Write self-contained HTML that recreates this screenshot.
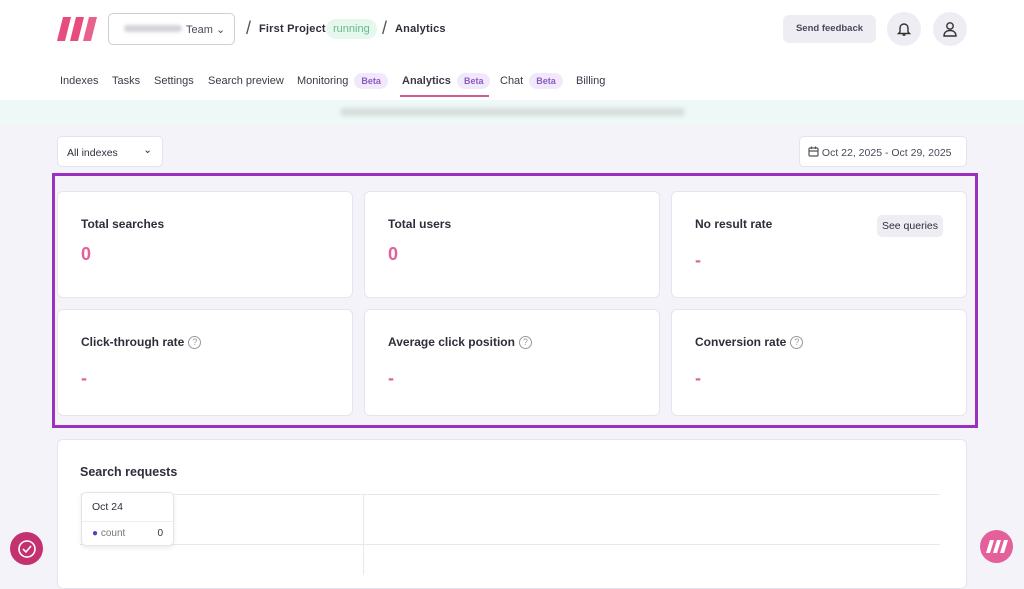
<!DOCTYPE html><html><head><style>
*{box-sizing:border-box;margin:0;padding:0}
body{width:1024px;height:575px;overflow:hidden;background:#f4f3f9;font-family:"Liberation Sans",sans-serif;color:#2f2d3a;position:relative}
.a{position:absolute}
.card{position:absolute;background:#fff;border:1px solid #e6e5ee;border-radius:6px;width:296px;height:107px}
.card .t{position:absolute;left:23px;top:25px;font-size:12px;font-weight:bold;color:#2f2d3a}
.card .v{position:absolute;left:23px;top:52px;font-size:18px;font-weight:bold;color:#e2609b}
.q{display:inline-block;width:13px;height:13px;border:1px solid #999;border-radius:50%;font-size:9px;text-align:center;line-height:11px;color:#999;font-weight:normal;margin-left:4px;vertical-align:1px}
.nav span{position:absolute;top:75px;font-size:11px;color:#3b3946}
.beta{background:#f1e9fb;color:#8a5cc0;border-radius:9px;padding:3px 7px;font-size:9px;font-weight:bold;margin-left:3px}
</style></head><body>
<div class="a" style="left:0;top:0;width:1024px;height:100px;background:#fff"></div>
<div class="a" style="left:0;top:100px;width:1024px;height:25px;background:#eef9f7"></div>
<div class="a" style="left:340px;top:108px;width:345px;height:8px;background:#d6dcdc;border-radius:4px;filter:blur(2px)"></div>
<svg class="a" style="left:57px;top:17px" width="40" height="25"><g fill="#e84c7c"><polygon points="6,0 14,0 8,24 0,24"/><polygon points="19,0 27,0 21,24 13,24"/><polygon points="32,0 40,0 34,24 26,24" fill="#e9628d"/></g></svg>
<div class="a" style="left:108px;top:13px;width:127px;height:32px;border:1px solid #cfcdd6;border-radius:5px"></div>
<div class="a" style="left:124px;top:25px;width:58px;height:7px;background:#d4d3da;border-radius:3px;filter:blur(1.5px)"></div>
<div class="a" style="left:186px;top:23px;font-size:11px;color:#4b4957">Team ⌄</div>
<div class="a" style="left:246px;top:18px;font-size:18px;color:#555">/</div>
<div class="a" style="left:259px;top:23px;font-size:11px;font-weight:bold;letter-spacing:.2px">First Project</div>
<div class="a" style="left:326px;top:19px;background:#e6f7ee;color:#66b98a;border-radius:10px;padding:4px 7px;font-size:11px">running</div>
<div class="a" style="left:382px;top:18px;font-size:18px;color:#555">/</div>
<div class="a" style="left:395px;top:23px;font-size:11px;font-weight:bold;letter-spacing:.2px">Analytics</div>
<div class="a" style="left:783px;top:15px;width:93px;height:28px;background:#eeedf3;border-radius:6px;font-size:9.5px;font-weight:bold;color:#4b4957;text-align:center;line-height:28px">Send feedback</div>
<div class="a" style="left:887px;top:12px;width:34px;height:34px;background:#eeedf3;border-radius:50%"></div>
<svg class="a" style="left:896px;top:21px" width="16" height="16" fill="none" stroke="#333" stroke-width="1.4"><path d="M4 11V7a4 4 0 0 1 8 0v4l1.5 1.5h-11z M6.5 14h3"/></svg>
<div class="a" style="left:933px;top:12px;width:34px;height:34px;background:#eeedf3;border-radius:50%"></div>
<svg class="a" style="left:942px;top:21px" width="16" height="16" fill="none" stroke="#333" stroke-width="1.4"><circle cx="8" cy="5" r="3.2"/><path d="M2 15c0-4 3-5.5 6-5.5s6 1.5 6 5.5z"/></svg>
<div class="nav">
<span style="left:60px">Indexes</span><span style="left:112px">Tasks</span><span style="left:154px">Settings</span><span style="left:208px">Search preview</span><span style="left:297px">Monitoring <b class="beta">Beta</b></span><span style="left:402px;font-weight:bold">Analytics <b class="beta">Beta</b></span><span style="left:500px">Chat <b class="beta">Beta</b></span><span style="left:576px">Billing</span></div>
<div class="a" style="left:400px;top:95px;width:89px;height:2px;background:#d55a93"></div>
<div class="a" style="left:57px;top:136px;width:106px;height:31px;background:#fff;border:1px solid #e4e3ea;border-radius:5px;font-size:10.5px;padding:10px 9px">All indexes<span style="position:absolute;right:10px;top:7px">⌄</span></div>
<div class="a" style="left:799px;top:136px;width:168px;height:31px;background:#fff;border:1px solid #e4e3ea;border-radius:5px;font-size:10.5px;padding:9px 8px;color:#4b4957">
<svg width="11" height="11" style="vertical-align:-1px" fill="none" stroke="#555" stroke-width="1.2"><rect x="1" y="2" width="9" height="8" rx="1"/><path d="M1 5h9M3.5 0.5v2.5M7.5 0.5v2.5"/></svg> Oct 22, 2025 - Oct 29, 2025</div>
<div class="a" style="left:52px;top:173px;width:926px;height:255px;border:3px solid #9b30bf"></div>
<div class="card" style="left:57px;top:191px"><div class="t">Total searches</div><div class="v">0</div></div>
<div class="card" style="left:364px;top:191px"><div class="t">Total users</div><div class="v">0</div></div>
<div class="card" style="left:671px;top:191px"><div class="t">No result rate</div><div class="v" style="top:58px">-</div><div class="a" style="right:23px;top:23px;background:#eeedf3;border-radius:5px;padding:5px 5px;font-size:10.5px">See queries</div></div>
<div class="card" style="left:57px;top:309px"><div class="t">Click-through rate<span class="q">?</span></div><div class="v" style="top:58px">-</div></div>
<div class="card" style="left:364px;top:309px"><div class="t">Average click position<span class="q">?</span></div><div class="v" style="top:58px">-</div></div>
<div class="card" style="left:671px;top:309px"><div class="t">Conversion rate<span class="q">?</span></div><div class="v" style="top:58px">-</div></div>
<div class="a" style="left:57px;top:439px;width:910px;height:150px;background:#fff;border:1px solid #e6e5ee;border-radius:6px"></div>
<div class="a" style="left:80px;top:465px;font-size:12.5px;font-weight:bold">Search requests</div>
<div class="a" style="left:80px;top:494px;width:860px;height:1px;background:#e8e7ee"></div>
<div class="a" style="left:80px;top:544px;width:860px;height:1px;background:#e8e7ee"></div>
<div class="a" style="left:363px;top:494px;width:1px;height:81px;background:#e8e7ee"></div>
<div class="a" style="left:81px;top:492px;width:93px;height:54px;background:#fff;border:1px solid #e4e3ea;border-radius:5px;box-shadow:0 2px 5px rgba(0,0,0,.08)"><div style="padding:8px 10px;font-size:10.5px;border-bottom:1px solid #eee">Oct 24</div><div style="padding:6px 10px;font-size:10px;color:#777"><span style="color:#4a47b8">●</span> count<span style="float:right;color:#333">0</span></div></div>
<div class="a" style="left:10px;top:532px;width:33px;height:33px;border-radius:50%;background:#c4316f"></div>
<svg class="a" style="left:16px;top:538px" width="21" height="21" fill="none" stroke="#fff" stroke-width="1.6"><circle cx="11" cy="11" r="8"/><path d="M7 11l3 3 5-6"/></svg>
<div class="a" style="left:980px;top:530px;width:33px;height:33px;border-radius:50%;background:#e3609b"></div>
<svg class="a" style="left:986px;top:540px" width="22" height="13"><g fill="#fff"><polygon points="4,0 8,0 4,13 0,13"/><polygon points="11,0 15,0 11,13 7,13"/><polygon points="18,0 22,0 18,13 14,13"/></g></svg>
</body></html>
